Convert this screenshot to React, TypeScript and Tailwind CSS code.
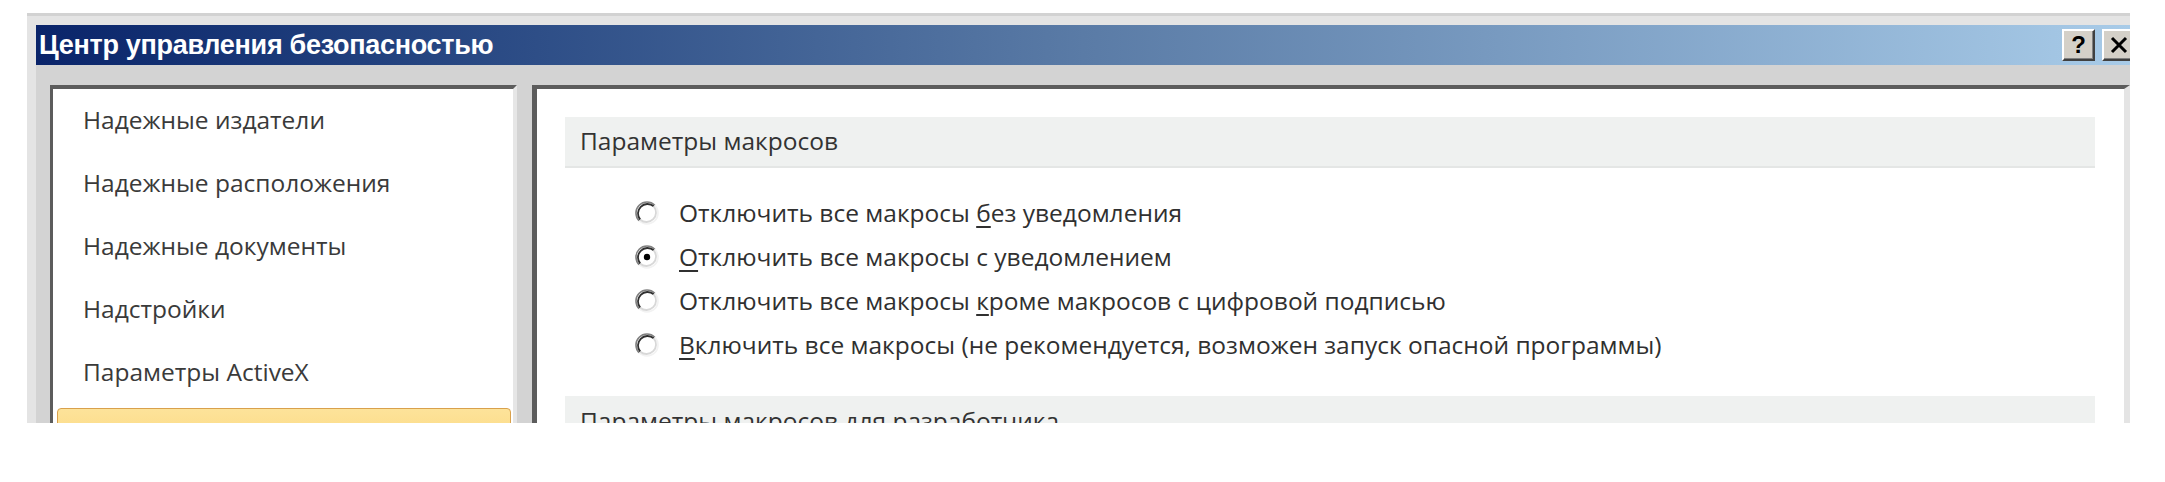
import React from "react";

const navItems = [
  "Надежные издатели",
  "Надежные расположения",
  "Надежные документы",
  "Надстройки",
  "Параметры ActiveX",
];

function Radio({ checked }: { checked?: boolean }) {
  return (
    <svg width="24" height="24" viewBox="0 0 24 24" className="shrink-0">
      <circle cx="12" cy="12" r="10" fill="#ffffff" />
      <path d="M4.2 19.8 A11 11 0 0 1 19.8 4.2" fill="none" stroke="#808080" strokeWidth="1.6" />
      <path d="M5.3 18.7 A9.5 9.5 0 0 1 18.7 5.3" fill="none" stroke="#303030" strokeWidth="1.8" />
      <path d="M19.8 4.2 A11 11 0 0 1 4.2 19.8" fill="none" stroke="#f2f2f2" strokeWidth="1.6" />
      <path d="M18.7 5.3 A9.5 9.5 0 0 1 5.3 18.7" fill="none" stroke="#d8d8d8" strokeWidth="1.8" />
      {checked && <circle cx="12" cy="12" r="3.2" fill="#000000" />}
    </svg>
  );
}

function Option({ checked, children }: { checked?: boolean; children: React.ReactNode }) {
  return (
    <div className="h-[44px] flex items-center pl-[98px] gap-[20px]">
      <Radio checked={checked} />
      <span className="text-[24.5px] text-[#303030] whitespace-nowrap">{children}</span>
    </div>
  );
}

function TitleButton({ children }: { children: React.ReactNode }) {
  return (
    <div className="w-[33px] h-[32px] bg-[#d4d0c8] border-t-2 border-l-2 border-t-white border-l-white border-r-2 border-b-2 border-r-[#404040] border-b-[#404040] shadow-[inset_-1px_-1px_#808080] flex items-center justify-center">
      {children}
    </div>
  );
}

export default function App() {
  return (
    <div className="w-[2165px] h-[482px] bg-white overflow-hidden" style={{ fontFamily: '"Open Sans", "Noto Sans", sans-serif' }}>
      <div className="ml-[27px] mt-[13px] w-[2103px] h-[410px] overflow-hidden bg-[#e4e4e4] border-t-[3px] border-[#d2d2d2] pt-[9px] pl-[9px] flex flex-col">
        {/* Title bar */}
        <div className="h-[40px] shrink-0 flex items-center justify-between pl-[3px] bg-gradient-to-r from-[#0a246a] via-[#5a7ba6] to-[#a8cbe8]">
          <span
            className="text-white font-bold text-[27px] tracking-[-0.3px] whitespace-nowrap"
            style={{ fontFamily: '"Liberation Sans", Arial, sans-serif' }}
          >
            Центр управления безопасностью
          </span>
          <div className="flex items-center gap-[7px] -mr-[5px]">
            <TitleButton>
              <span className="text-black font-bold text-[24px] leading-none" style={{ fontFamily: '"Liberation Sans", Arial, sans-serif' }}>?</span>
            </TitleButton>
            <TitleButton>
              <svg width="18" height="18" viewBox="0 0 18 18">
                <path d="M2 2 L16 16 M16 2 L2 16" stroke="#000" strokeWidth="3" />
              </svg>
            </TitleButton>
          </div>
        </div>

        {/* Body */}
        <div className="flex-1 bg-[#d3d3d3] pt-[20px] pl-[14px] flex gap-[15px]">
          {/* Left nav */}
          <div className="w-[467px] shrink-0 bg-white border-t-4 border-l-[3px] border-t-[#5c5c5c] border-l-[#5c5c5c] border-r-4 border-r-[#e6e6e6]">
            {navItems.map((item) => (
              <div key={item} className="h-[63px] flex items-center pl-[30px] text-[24.5px] text-[#3a3a3a] whitespace-nowrap">
                {item}
              </div>
            ))}
            <div className="mt-[4px] ml-[4px] mr-[2px] h-[63px] rounded-[4px] border border-[#d9a14c] bg-gradient-to-b from-[#fde39a] to-[#fbd26f] flex items-center pl-[26px] text-[24.5px] text-[#3a3a3a]">
              Параметры макросов
            </div>
          </div>

          {/* Right panel */}
          <div className="flex-1 bg-white border-t-4 border-l-[5px] border-t-[#5c5c5c] border-l-[#5c5c5c] border-r-[6px] border-r-[#e4e4e4] pt-[28px] pl-[28px] pr-[29px]">
            <div className="h-[51px] bg-[#eff1f0] border-b-2 border-[#e4e6e5] flex items-center pl-[15px] text-[24.5px] text-[#333333]">
              Параметры макросов
            </div>
            <div className="mt-[23px] -ml-[28px]">
              <Option>
                Отключить все макросы <span className="underline underline-offset-4">б</span>ез уведомления
              </Option>
              <Option checked>
                <span className="underline underline-offset-4">О</span>тключить все макросы с уведомлением
              </Option>
              <Option>
                Отключить все макросы <span className="underline underline-offset-4">к</span>роме макросов с цифровой подписью
              </Option>
              <Option>
                <span className="underline underline-offset-4">В</span>ключить все макросы (не рекомендуется, возможен запуск опасной программы)
              </Option>
            </div>
            <div className="mt-[29px] h-[51px] bg-[#eff1f0] flex items-center pl-[15px] text-[24.5px] text-[#333333]">
              Параметры макросов для разработчика
            </div>
          </div>
        </div>
      </div>
    </div>
  );
}
